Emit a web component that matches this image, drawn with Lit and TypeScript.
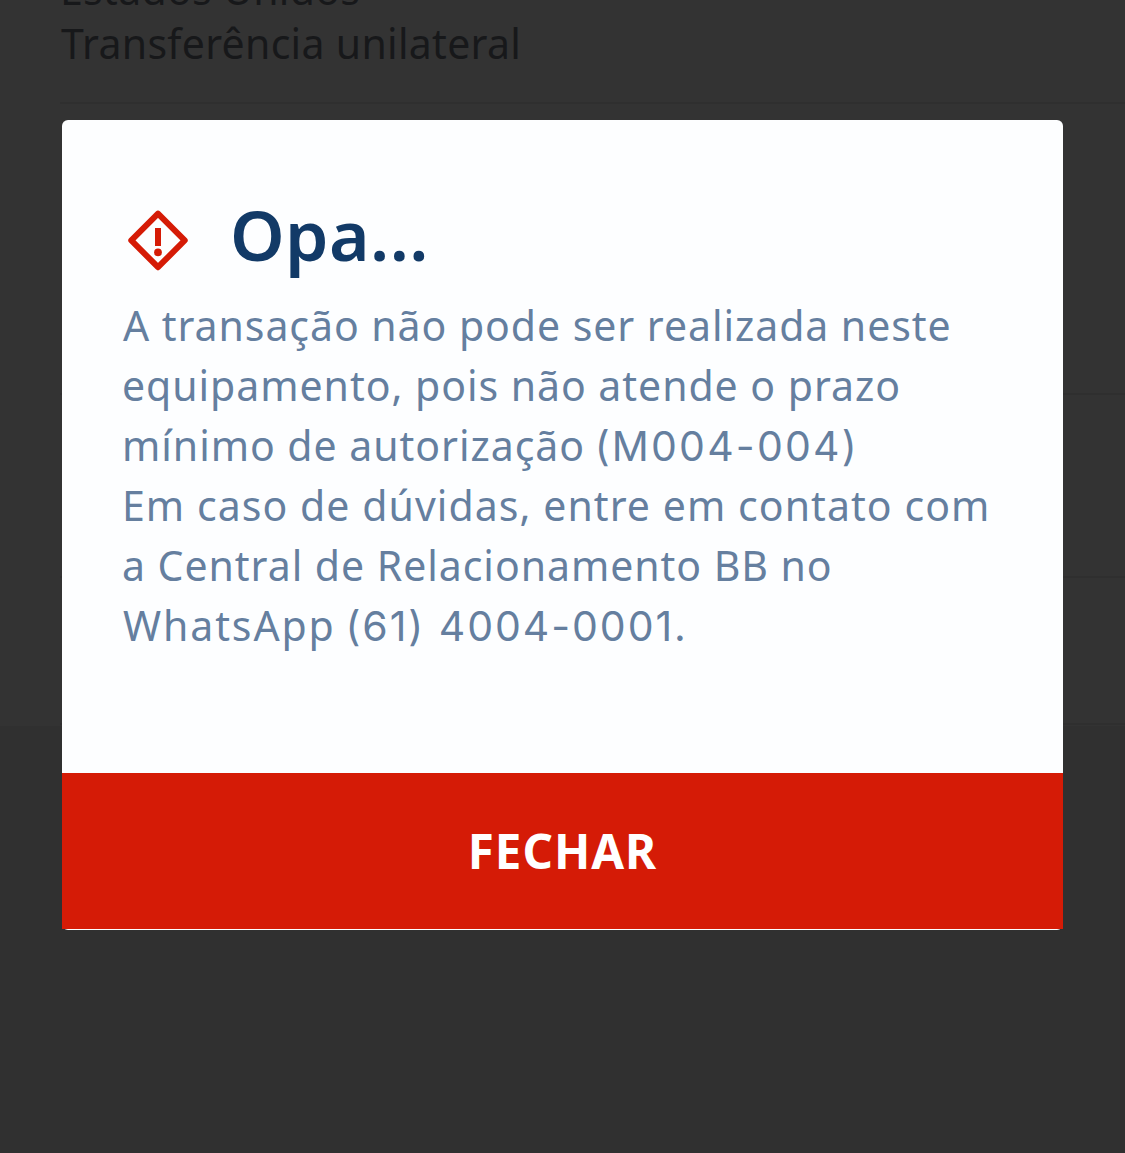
import { LitElement, html, css } from "lit";
import { customElement } from "lit/decorators.js";

@customElement("app-root")
export class AppRoot extends LitElement {
  static styles = css`
    :host {
      display: block;
      font-family: "Noto Sans", sans-serif;
    }
    .screen {
      position: relative;
      display: flex;
      flex-direction: column;
      height: 1153px;
      overflow: hidden;
      background: #303030;
    }
    .panel {
      display: flex;
      flex-direction: column;
      height: 726px;
      box-sizing: border-box;
      padding-left: 60px;
      background: #333333;
      overflow: hidden;
    }
    .row {
      flex: none;
      box-sizing: border-box;
      border-bottom: 2px solid #2f2f2f;
      color: #17181a;
      font-size: 41px;
      line-height: 54px;
      white-space: nowrap;
    }
    .row.details {
      height: 142px;
      margin-top: -38px;
      padding-left: 1px;
      letter-spacing: 0.3px;
    }
    .row.details .country {
      margin-left: -1px;
      letter-spacing: 0.3px;
    }
    .row.large {
      height: 291px;
    }
    .row.medium {
      height: 183px;
    }
    .row.small {
      height: 147px;
    }
    .overlay {
      position: absolute;
      inset: 0;
      display: flex;
      flex-direction: column;
      padding: 120px 62px 0;
    }
    .dialog {
      display: flex;
      flex-direction: column;
      height: 810px;
      border-radius: 6px;
      background: #fdfeff;
    }
    .content {
      height: 653px;
      box-sizing: border-box;
      padding: 75px 0 0 61px;
    }
    .heading {
      display: flex;
      align-items: flex-start;
      height: 80px;
      margin-bottom: 20px;
    }
    .icon {
      flex: none;
      width: 60px;
      height: 61px;
      margin: 15px 42px 0 5px;
    }
    h1 {
      margin: -1px 0 0;
      color: #123a67;
      font-size: 69.5px;
      font-weight: 600;
      line-height: 80px;
      letter-spacing: 0.4px;
    }
    .line {
      height: 60px;
      color: #657f9f;
      font-size: 41px;
      line-height: 60px;
      letter-spacing: 1px;
      white-space: nowrap;
    }
    .line.first {
      letter-spacing: 0.95px;
    }
    .line.contact {
      margin-left: -1px;
      letter-spacing: 1.06px;
    }
    .line.lower {
      margin-left: -1px;
      letter-spacing: 0.96px;
    }
    .code,
    .phone {
      margin-left: -2px;
      font-family: Inter, sans-serif;
      line-height: 1;
    }
    .code {
      letter-spacing: 2.2px;
    }
    .brand {
      letter-spacing: 1.9px;
    }
    .phone {
      letter-spacing: 1.95px;
    }
    button {
      height: 156px;
      margin: 0;
      padding: 0 0 1px;
      border: 0;
      background: #d51b06;
      color: #ffffff;
      font: 700 47.5px / 60px "Noto Sans", sans-serif;
      letter-spacing: 1px;
    }
  `;

  render() {
    return html`
      <div class="screen">
        <div class="panel">
          <div class="row details">
            <div class="country">Estados Unidos</div>
            <div>Transferência unilateral</div>
          </div>
          <div class="row large"></div>
          <div class="row medium"></div>
          <div class="row small"></div>
        </div>
        <div class="overlay">
          <div class="dialog" role="alertdialog">
            <div class="content">
              <div class="heading">
                <svg class="icon" viewBox="0 0 60 61">
                  <path
                    d="M30 3.6 56.7 30.4 30 57.2 3.3 30.4Z"
                    fill="none"
                    stroke="#d51b06"
                    stroke-width="6"
                    stroke-linejoin="round"
                  />
                  <path d="M27 18h6v18h-6z" fill="#d51b06" />
                  <circle cx="30" cy="42.4" r="3.9" fill="#d51b06" />
                </svg>
                <h1>Opa...</h1>
              </div>
              <div class="line first">A transação não pode ser realizada neste</div>
              <div class="line lower">equipamento, pois não atende o prazo</div>
              <div class="line lower">mínimo de autorização <span class="code">(M004-004)</span></div>
              <div class="line contact">Em caso de dúvidas, entre em contato com</div>
              <div class="line lower">a Central de Relacionamento BB no</div>
              <div class="line">
                <span class="brand">WhatsApp</span> <span class="phone">(61) 4004-0001.</span>
              </div>
            </div>
            <button>FECHAR</button>
          </div>
        </div>
      </div>
    `;
  }
}
